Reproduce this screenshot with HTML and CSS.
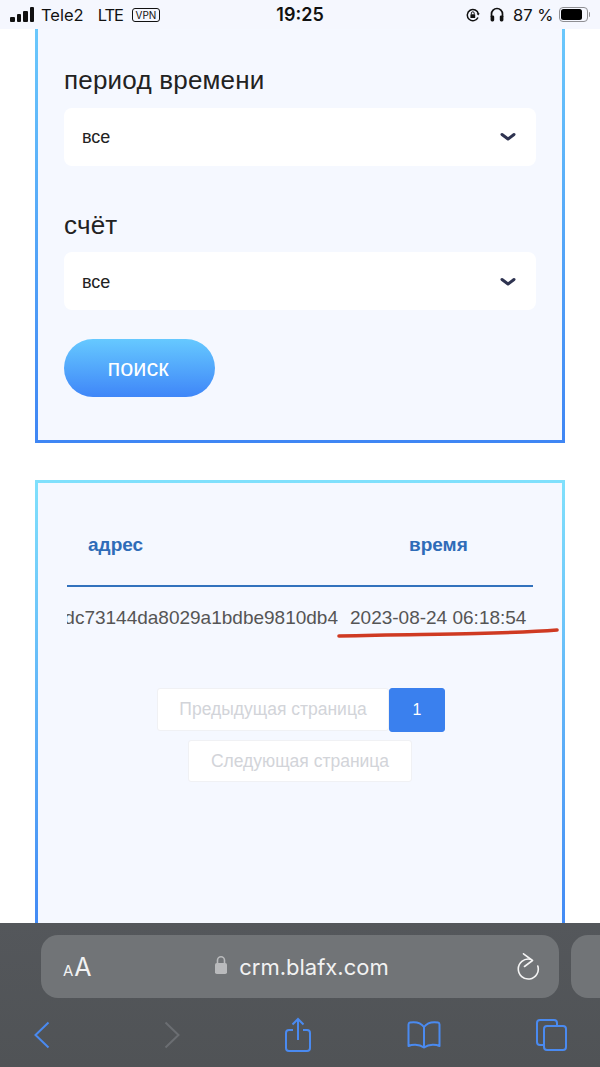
FILE: index.html
```html
<!DOCTYPE html>
<html lang="ru">
<head>
  <meta charset="UTF-8" />
  <meta name="viewport" content="width=device-width, initial-scale=1.0"/>
  <title>crm.blafx.com</title>
  <link rel="stylesheet" href="styles.css">
</head>
<body>
  <div class="status-bar">
    <div class="status-left">
      <div class="signal"><i class="s1"></i><i class="s2"></i><i class="s3"></i><i class="s4"></i></div>
      <span class="carrier">Tele2</span>
      <span class="net">LTE</span>
      <span class="vpn">VPN</span>
    </div>
    <div class="status-time">19:25</div>
    <div class="status-right">
      <svg class="ic-lock" width="14" height="14" viewBox="0 0 14 14">
        <path d="M12 9.5A5.6 5.6 0 1 1 12.4 6" fill="none" stroke="#111" stroke-width="1.5"/>
        <path d="M10.6 5.6h3.2l-1.6 2z" fill="#111"/>
        <rect x="4.4" y="6.2" width="4.8" height="3.8" rx=".6" fill="#111"/>
        <path d="M5.4 6.4V5.2a1.4 1.4 0 0 1 2.8 0v1.2" fill="none" stroke="#111" stroke-width="1"/>
      </svg>
      <svg class="ic-phones" width="14" height="15" viewBox="0 0 14 15">
        <path d="M1.5 10V7a5.5 5.5 0 0 1 11 0v3" fill="none" stroke="#111" stroke-width="1.7"/>
        <rect x=".6" y="8.4" width="3.6" height="6" rx="1.4" fill="#111"/>
        <rect x="9.8" y="8.4" width="3.6" height="6" rx="1.4" fill="#111"/>
      </svg>
      <span class="percent">87 %</span>
      <div class="battery"><div class="battery-fill"></div></div>
      <div class="battery-cap"></div>
    </div>
  </div>

  <main class="page">
    <section class="card card-filter">
      <div class="field">
        <label class="field-label">период времени</label>
        <div class="select">
          <span>все</span>
          <svg width="16" height="10" viewBox="0 0 16 10"><path d="M2 2.5l6 4.5 6-4.5" fill="none" stroke="#2e3350" stroke-width="3" stroke-linecap="round" stroke-linejoin="round"/></svg>
        </div>
      </div>
      <div class="field">
        <label class="field-label">счёт</label>
        <div class="select">
          <span>все</span>
          <svg width="16" height="10" viewBox="0 0 16 10"><path d="M2 2.5l6 4.5 6-4.5" fill="none" stroke="#2e3350" stroke-width="3" stroke-linecap="round" stroke-linejoin="round"/></svg>
        </div>
      </div>
      <button class="search-btn">поиск</button>
    </section>

    <section class="card card-table">
      <div class="table-wrap">
        <div class="table-head">
          <div class="col-addr">адрес</div>
          <div class="col-time">время</div>
        </div>
        <div class="table-row">
          <div class="cell-addr">dc73144da8029a1bdbe9810db4</div>
          <div class="cell-time">2023-08-24 06:18:54</div>
        </div>
      </div>
      <div class="pager">
        <button class="page-btn btn-prev">Предыдущая страница</button>
        <button class="page-btn page-current">1</button>
        <button class="page-btn btn-next">Следующая страница</button>
      </div>
    </section>

    <svg class="red-mark" width="230" height="14" viewBox="0 0 230 14">
      <path d="M3 11C60 9.500 100 9.500 140 8.500S203 6.500 221 5" fill="none" stroke="#cf3a22" stroke-width="3.600" stroke-linecap="round"/>
    </svg>
  </main>

  <div class="toolbar">
    <div class="url-row">
      <div class="url-bar">
        <span class="aa"><small>A</small>A</span>
        <div class="url">
          <svg width="14" height="20" viewBox="0 0 14 20">
            <rect x="1" y="8" width="12" height="11" rx="1.800" fill="#b9babc"/>
            <path d="M3.500 8.500V5.200a3.500 3.500 0 0 1 7 0v3.300" fill="none" stroke="#b9babc" stroke-width="1.600"/>
          </svg>
          <span>crm.blafx.com</span>
        </div>
        <svg class="reload" width="23" height="27" viewBox="0 0 23 27">
          <path d="M13 6.200A10 10 0 1 0 20.800 13" fill="none" stroke="#f4f4f4" stroke-width="1.600" stroke-linecap="round"/>
          <path d="M6.500 .8l9 6.700-8 6" fill="none" stroke="#f4f4f4" stroke-width="1.600" stroke-linecap="round" stroke-linejoin="round"/>
        </svg>
      </div>
      <div class="url-next"></div>
    </div>
    <div class="nav-row">
      <div class="nav-slot"><svg width="17" height="28" viewBox="0 0 17 28"><path d="M15.500 1.500L2.500 14l13 12.500" fill="none" stroke="#4a8af0" stroke-width="2"/></svg></div>
      <div class="nav-slot"><svg width="17" height="28" viewBox="0 0 17 28"><path d="M1.500 1.500L14.500 14l-13 12.500" fill="none" stroke="#6b6e72" stroke-width="2"/></svg></div>
      <div class="nav-slot"><svg width="28" height="36" viewBox="0 0 28 36">
        <path d="M9 13H5a3 3 0 0 0-3 3v15a3 3 0 0 0 3 3h18a3 3 0 0 0 3-3V16a3 3 0 0 0-3-3h-4" fill="none" stroke="#4a8af0" stroke-width="2"/>
        <path d="M14 23V2M8.500 7.500L14 2l5.500 5.500" fill="none" stroke="#4a8af0" stroke-width="2"/>
      </svg></div>
      <div class="nav-slot"><svg width="34" height="30" viewBox="0 0 34 30">
        <path d="M17 7C14 3 9 1.500 3 2.500 2 2.700 1.500 3.500 1.500 4.500V26c3-1.500 10-2.500 15.500 1.500 5.500-4 12.500-3 15.500-1.500V4.500c0-1-.5-1.800-1.500-2C25 1.500 20 3 17 7z" fill="none" stroke="#4a8af0" stroke-width="2" stroke-linejoin="round"/>
        <path d="M17 7v20" stroke="#4a8af0" stroke-width="2"/>
      </svg></div>
      <div class="nav-slot"><svg width="32" height="33" viewBox="0 0 32 33">
        <rect x="9" y="8" width="22" height="24" rx="3" fill="none" stroke="#4a8af0" stroke-width="2"/>
        <path d="M9 27H5a3 3 0 0 1-3-3V5a3 3 0 0 1 3-3h14a3 3 0 0 1 3 3v3" fill="none" stroke="#4a8af0" stroke-width="2"/>
      </svg></div>
    </div>
  </div>
</body>
</html>
```

FILE: styles.css
```css
html, body {
  margin: 0;
  padding: 0;
}

body {
  width: 600px;
  height: 1067px;
  display: flex;
  flex-direction: column;
  overflow: hidden;
  background: #fff;
  font-family: "Liberation Sans", sans-serif;
}

/* status bar */
.status-bar {
  height: 29px;
  flex: none;
  background: #f5f7fe;
  display: flex;
  align-items: center;
  justify-content: space-between;
  padding: 0 10px;
  position: relative;
  font-family: Inter, sans-serif;
  color: #111;
}

.status-left, .status-right {
  display: flex;
  align-items: center;
}

.signal {
  display: flex;
  align-items: flex-end;
  gap: 2px;
  height: 15px;
  margin-right: 7px;
}

.signal i {
  display: block;
  width: 4.500px;
  background: #111;
  border-radius: 1px;
}

.s1 { height: 5px; }
.s2 { height: 8px; }
.s3 { height: 11px; }
.s4 { height: 15px; }

.carrier, .net {
  font-size: 16.500px;
}

.net {
  margin-left: 14px;
  letter-spacing: -1px;
}

.vpn {
  margin-left: 9px;
  border: 1px solid #111;
  border-radius: 3px;
  font-size: 10px;
  line-height: 12px;
  padding: 0 2px;
  width: 22px;
  text-align: center;
}

.status-time {
  position: absolute;
  left: 0;
  right: 0;
  text-align: center;
  font-size: 18px;
  font-weight: 600;
}

.ic-phones {
  margin-left: 10px;
}

.percent {
  margin-left: 9px;
  font-size: 16.500px;
}

.battery {
  width: 25px;
  height: 11px;
  margin-left: 5px;
  border: 1px solid #8f8f93;
  border-radius: 4px;
  padding: 1px;
}

.battery-fill {
  width: 85%;
  height: 100%;
  background: #000;
  border-radius: 2.500px;
}

.battery-cap {
  width: 1.500px;
  height: 5px;
  margin-left: 1px;
  background: #8f8f93;
  border-radius: 0 1px 1px 0;
}

/* page */
.page {
  flex: 1;
  min-height: 0;
  position: relative;
  overflow: hidden;
  padding: 0 35px;
}

.card {
  background: #f5f8ff;
  border: 3px solid;
  border-image: linear-gradient(180deg, #6ac8fc, #3f86f4) 1;
}

.card-filter {
  border-top: 0;
  height: 414px;
  padding: 0 26px;
  box-sizing: border-box;
}

.field-label {
  display: block;
  font-size: 26px;
  line-height: 28px;
  color: #222;
  letter-spacing: .2px;
}

.card-filter .field:first-child {
  padding-top: 37px;
}

.field + .field {
  margin-top: 45px;
}

.select {
  box-sizing: border-box;
  margin-top: 14px;
  height: 58px;
  background: #fff;
  border-radius: 8px;
  display: flex;
  align-items: center;
  justify-content: space-between;
  padding: 0 20px 0 18px;
  font-size: 18px;
  color: #222;
}

.field:last-of-type .select {
  margin-top: 13px;
  padding-top: 2px;
}

.search-btn {
  display: block;
  margin-top: 29px;
  width: 151px;
  height: 58px;
  border: none;
  border-radius: 29px;
  background: linear-gradient(180deg, #66c9ff, #3f86f8);
  color: #fff;
  font-family: "Liberation Sans", sans-serif;
  font-size: 23.500px;
  padding: 0 3px 0 0;
}

.card-table {
  margin-top: 37px;
  height: 460px;
  padding: 0 29px;
  border-image: linear-gradient(180deg, #80e0fc, #3f86f4) 1;
}

.table-wrap {
  overflow: hidden;
}

.table-head {
  height: 102px;
  border-bottom: 2px solid #3272bd;
  position: relative;
  font-size: 19px;
  font-weight: bold;
  color: #2f6cb8;
}

.col-addr, .col-time {
  position: absolute;
  top: 52px;
  line-height: 20px;
}

.col-addr { left: 21px; }
.col-time { left: 342px; }

.table-row {
  display: flex;
  height: 62px;
  line-height: 62px;
  font-size: 19px;
  color: #555;
  white-space: nowrap;
}

.cell-addr {
  width: 271px;
  direction: rtl;
  overflow: hidden;
  flex: none;
  text-align: left;
}

.cell-time {
  flex: none;
  padding-left: 12px;
}

.pager {
  margin-top: 39px;
  display: flex;
  flex-wrap: wrap;
  justify-content: center;
  row-gap: 8px;
}

.page-btn {
  height: 43px;
  border: 1px solid #f0f1f4;
  border-radius: 3px;
  background: #fff;
  color: #d2d4d9;
  font-family: "Liberation Sans", sans-serif;
  font-size: 17.500px;
  padding: 0;
}

.btn-prev {
  width: 232px;
  margin-left: 2px;
}

.btn-next {
  width: 224px;
  height: 42px;
}

.page-current {
  width: 56px;
  height: 44px;
  background: #3a80ee;
  border-color: #3a80ee;
  color: #fff;
  font-size: 16px;
}

.red-mark {
  position: absolute;
  left: 336px;
  top: 596px;
}

/* safari toolbar */
.toolbar {
  height: 144px;
  flex: none;
  background: linear-gradient(180deg, #54575b, #505356);
  box-sizing: border-box;
  padding-top: 12px;
}

.url-row {
  display: flex;
  gap: 12px;
  padding-left: 41px;
}

.url-bar {
  flex: none;
  width: 518px;
  height: 63px;
  border-radius: 17px;
  background: #717477;
  position: relative;
  display: flex;
  align-items: center;
  justify-content: center;
  font-family: Inter, sans-serif;
  color: #f2f2f2;
}

.url-next {
  flex: 1;
  height: 63px;
  background: #717477;
  border-radius: 17px 0 0 17px;
}

.aa {
  position: absolute;
  left: 22px;
  font-size: 25px;
}

.aa small {
  font-size: 15px;
  margin-right: 1px;
}

.url {
  display: flex;
  align-items: center;
  gap: 11px;
  font-size: 22px;
  margin-left: 3px;
}

.url svg {
  margin-bottom: 3px;
}

.reload {
  position: absolute;
  left: 476px;
  top: 18px;
}

.nav-row {
  height: 73px;
  display: grid;
  grid-template-columns: 130.500px 125.500px 126.500px 126.500px 40px;
  align-items: center;
  padding-left: 21.500px;
}

.nav-slot {
  width: 40px;
  display: flex;
  justify-content: center;
}
```
